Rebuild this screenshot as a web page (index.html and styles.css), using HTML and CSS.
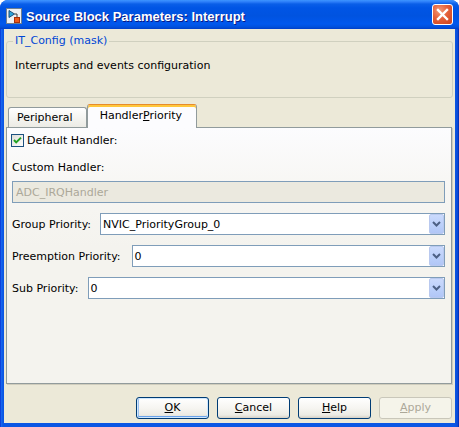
FILE: index.html
```html
<!DOCTYPE html>
<html>
<head>
<meta charset="utf-8">
<link rel="stylesheet" href="styles.css">
</head>
<body>
<div class="window">
  <div class="titlebar">
    <svg class="appicon" width="16" height="16" viewBox="0 0 16 16">
      <rect x="0.5" y="0.5" width="15" height="15" fill="#eef1f4" stroke="#6f7f90"/>
      <path d="M3 2.5 L3 9.5 L8.5 6 Z" fill="#2ca6dc" stroke="#1b4f7c" stroke-width="1"/>
      <path d="M8.5 6 H11 V9" stroke="#3a3a3a" fill="none"/>
      <rect x="8.5" y="9.5" width="5" height="5" fill="#ea5a1c" stroke="#a8300a"/>
    </svg>
    <span class="title">Source Block Parameters: Interrupt</span>
    <div class="close">
      <svg width="21" height="21" viewBox="0 0 21 21">
        <path d="M6 6 L15 15 M15 6 L6 15" stroke="#fff" stroke-width="2.4" stroke-linecap="square"/>
      </svg>
    </div>
  </div>
  <div class="client">
    <fieldset class="group">
      <legend class="group-title">IT_Config (mask)</legend>
      <p class="desc">Interrupts and events configuration</p>
    </fieldset>
    <div class="tabs">
      <div class="tab">Peripheral</div>
      <div class="tab active">Handler<u>P</u>riority</div>
    </div>
    <div class="panel">
      <div class="check-row">
        <svg class="checkbox" width="13" height="13" viewBox="0 0 13 13">
          <defs>
            <linearGradient id="cbg" x1="0" y1="0" x2="1" y2="1">
              <stop offset="0" stop-color="#dcdcd7"/>
              <stop offset="1" stop-color="#ffffff"/>
            </linearGradient>
          </defs>
          <rect x="0.5" y="0.5" width="12" height="12" fill="url(#cbg)" stroke="#1c5180"/>
          <path d="M3 6 L5.2 8.4 L10 3.6" stroke="#21a121" stroke-width="2" fill="none"/>
        </svg>
        <span class="check-label">Default Handler:</span>
      </div>
      <div class="label-row">Custom Handler:</div>
      <div class="field disabled">ADC_IRQHandler</div>
      <div class="select-row">
        <span class="label lbl-group">Group Priority:</span>
        <div class="select"><span class="value">NVIC_PriorityGroup_0</span><span class="drop"><svg width="15" height="20" viewBox="0 0 15 20"><path d="M4 8 L7.5 11.5 L11 8" stroke="#4d6185" stroke-width="2" fill="none"/></svg></span></div>
      </div>
      <div class="select-row">
        <span class="label lbl-pre">Preemption Priority:</span>
        <div class="select"><span class="value">0</span><span class="drop"><svg width="15" height="20" viewBox="0 0 15 20"><path d="M4 8 L7.5 11.5 L11 8" stroke="#4d6185" stroke-width="2" fill="none"/></svg></span></div>
      </div>
      <div class="select-row">
        <span class="label lbl-sub">Sub Priority:</span>
        <div class="select"><span class="value">0</span><span class="drop"><svg width="15" height="20" viewBox="0 0 15 20"><path d="M4 8 L7.5 11.5 L11 8" stroke="#4d6185" stroke-width="2" fill="none"/></svg></span></div>
      </div>
    </div>
    <div class="buttons">
      <div class="btn default"><u>O</u>K</div>
      <div class="btn"><u>C</u>ancel</div>
      <div class="btn"><u>H</u>elp</div>
      <div class="btn disabled"><u>A</u>pply</div>
    </div>
  </div>
</div>
</body>
</html>
```
FILE: styles.css
```css
* { box-sizing: border-box; }
html, body { margin: 0; padding: 0; background: #ffffff; }
body {
  font-family: "DejaVu Sans", sans-serif;
  font-size: 11px;
  line-height: 14px;
  color: #000;
}
.window {
  width: 459px;
  height: 427px;
  display: flex;
  flex-direction: column;
  background: linear-gradient(to right, #0019c8 0, #1a6af0 1px, #0a56e4 3px, #0a56e4 455px, #0a48d4 458px, #001ea0 459px);
  border-radius: 8px 8px 0 0;
  overflow: hidden;
}
.titlebar {
  height: 29px;
  flex: none;
  display: flex;
  align-items: center;
  padding-left: 6px;
  background: linear-gradient(to bottom, #3d95ff 0, #2a7cf8 2px, #0a5fe8 4px, #0055e5 8px, #0053e0 16px, #0058ee 24px, #0050dc 27px, #003ec8 29px);
}
.appicon { flex: none; margin-top: 2px; }
.title {
  margin-left: 4px;
  font-family: "Liberation Sans", Arial, sans-serif;
  font-weight: bold;
  font-size: 13px;
  color: #fff;
  text-shadow: 1px 1px 0 #0a1883;
  padding-top: 5px;
}
.close {
  margin-left: auto;
  margin-right: 6px;
  width: 21px;
  height: 21px;
  border: 1px solid #fff;
  border-radius: 3px;
  background: radial-gradient(circle at 35% 30%, #f29a78 0, #e4603a 45%, #cc421c 100%);
  display: flex;
  align-items: center;
  justify-content: center;
}
.close svg { display: block; margin: -1px; }
.client {
  flex: 1;
  margin: 0 4px 4px;
  background: #ece9d8;
  padding: 5px 2px 4px;
  display: flex;
  flex-direction: column;
}
.group {
  margin: 0;
  padding: 10px 8px 24px;
  border: 1px solid #d0d0bf;
  border-radius: 3px;
}
.group-title {
  color: #0046d5;
  padding: 0 2px;
  margin-left: -2px;
  line-height: 14px;
}
.desc { margin: 0; padding-top: 1px; }
.tabs {
  margin-top: 6px;
  padding-left: 2px;
  display: flex;
  align-items: flex-end;
  height: 23px;
  position: relative;
  z-index: 1;
}
.tab {
  height: 20px;
  padding: 3px 13px 0 8px;
  border: 1px solid #919b9c;
  border-bottom: none;
  border-radius: 3px 3px 0 0;
  background: linear-gradient(to bottom, #ffffff 0, #f3f3ef 60%, #ecebe5 100%);
}
.tab.active {
  height: 24px;
  margin-bottom: -1px;
  padding: 4px 14px 0 12px;
  border-top: 1px solid #e68b2c;
  box-shadow: inset 0 2px 0 #ffc73c;
  background: #fcfcfe;
}
.panel {
  height: 257px;
  margin-right: 1px;
  border: 1px solid #919b9c;
  box-shadow: 1px 1px 0 #d0cdbd;
  background: linear-gradient(to bottom, #fcfcfe 0, #f7f6f3 60px, #f4f3ee 120px, #f4f3ee 100%);
  padding: 5px 6px 0 5px;
  display: flex;
  flex-direction: column;
}
.check-row {
  display: flex;
  align-items: flex-start;
  height: 14px;
  margin-left: -1px;
}
.checkbox { display: block; margin-right: 3px; margin-top: 1px; flex: none; }
.check-label { padding-top: 1px; }
.label-row { margin-top: 13px; height: 14px; padding-top: 1px; }
.field {
  margin-top: 7px;
  height: 22px;
  border: 1px solid #7f9db9;
  padding: 4px 3px 0;
  background: #fff;
}
.field.disabled {
  background: #ebe9df;
  color: #aca899;
}
.select-row {
  margin-top: 10px;
  display: flex;
  align-items: center;
  height: 22px;
}
.label { flex: none; padding-top: 2px; }
.lbl-group { margin-right: 9px; }
.lbl-pre { margin-right: 11px; }
.lbl-sub { margin-right: 9px; }
.select {
  flex: 1;
  height: 22px;
  border: 1px solid #7f9db9;
  background: #fff;
  display: flex;
  align-items: stretch;
}
.select .value {
  flex: 1;
  padding: 4px 2px 0;
}
.select .drop {
  width: 15px;
  border: 1px solid #b9c9ef;
  border-radius: 2px;
  background: linear-gradient(to bottom, #cbdafc 0, #bacffa 60%, #b1c6f6 100%);
}
.select .drop svg { display: block; margin: -1px; }
.buttons {
  margin-top: 13px;
  margin-right: 1px;
  display: flex;
  justify-content: flex-end;
  gap: 8px;
}
.btn {
  width: 73px;
  height: 22px;
  border: 1px solid #003c74;
  border-radius: 3px;
  background: linear-gradient(to bottom, #ffffff 0, #f6f5f1 50%, #ecebe4 85%, #d6d0c5 100%);
  text-align: center;
  line-height: 20px;
}
.btn.default {
  box-shadow: inset 0 0 0 1px #cee7ff, inset 0 -1px 0 1px #69a2ea, inset 1px 0 0 1px #9dc1f0;
}
.btn.disabled {
  border-color: #c9c7ba;
  color: #aca899;
  background: #f5f4ea;
}
```
